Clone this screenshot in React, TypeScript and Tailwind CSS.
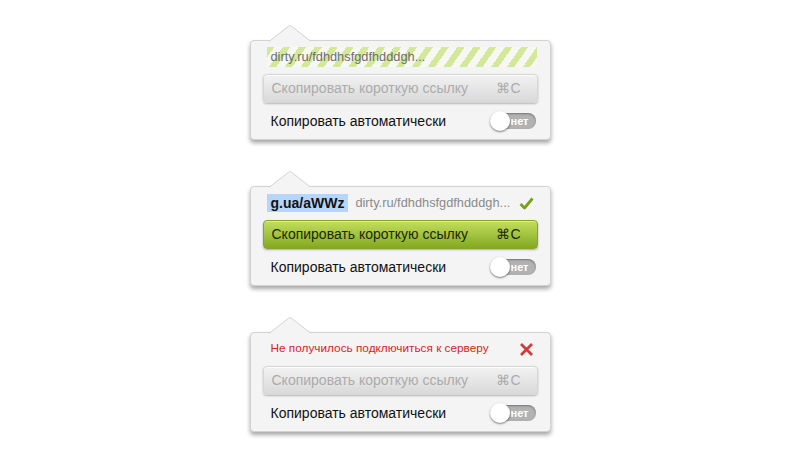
import React from 'react';

const font = { fontFamily: '"Liberation Sans", Arial, sans-serif' };

const Arrow: React.FC = () => (
  <svg
    className="absolute left-[18px] -top-[16px]"
    width="44"
    height="17"
    viewBox="0 0 44 17"
  >
    <path d="M0 16.5 L19.5 1.2 Q21 0 22.5 1.2 L42 16.5" fill="#f4f4f4" stroke="#d2d2d2" strokeWidth="1" />
    <rect x="1" y="16" width="41" height="1" fill="#f4f4f4" />
  </svg>
);

const Toggle: React.FC = () => (
  <div className="relative w-[45px] h-[16px] rounded-full bg-[#b2b2b2] shadow-[inset_0_1px_2px_rgba(0,0,0,0.35)] flex items-center justify-end pr-[7px]">
    <span className="text-[11px] font-bold text-white leading-none">нет</span>
    <div className="absolute -left-[1px] -top-[2px] w-[20px] h-[20px] rounded-full bg-white shadow-[0_1px_2px_rgba(0,0,0,0.5)]" />
  </div>
);

const CopyButton: React.FC<{ active?: boolean }> = ({ active }) =>
  active ? (
    <div className="mt-[7px] h-[29px] rounded-[4px] border border-[#86a526] bg-gradient-to-b from-[#c3df5c] to-[#83a91f] shadow-[0_1px_2px_rgba(0,0,0,0.3),inset_0_1px_0_rgba(255,255,255,0.4)] flex items-center justify-between pl-[8px] pr-[16px] text-[14px] text-[#1c2606]">
      <span>Скопировать короткую ссылку</span>
      <span>⌘C</span>
    </div>
  ) : (
    <div className="mt-[7px] h-[29px] rounded-[4px] border border-[#d6d6d6] bg-gradient-to-b from-[#f2f2f2] to-[#d9d9d9] shadow-[0_1px_2px_rgba(0,0,0,0.25),inset_0_1px_0_rgba(255,255,255,0.8)] flex items-center justify-between pl-[8px] pr-[16px] text-[14px] text-[#ababab]">
      <span>Скопировать короткую ссылку</span>
      <span>⌘C</span>
    </div>
  );

const AutoRow: React.FC = () => (
  <div className="h-[36px] flex items-center justify-between pl-[8px] pr-[2px]">
    <span className="text-[14px] text-[#111]">Копировать автоматически</span>
    <Toggle />
  </div>
);

const Card: React.FC<{ children: React.ReactNode }> = ({ children }) => (
  <div className="relative w-[301px] h-[100px] bg-[#f4f4f4] border border-[#d2d2d2] rounded-[4px] shadow-[0_3px_4px_rgba(0,0,0,0.35)] px-[12px] pt-[6px]">
    <Arrow />
    {children}
  </div>
);

const App: React.FC = () => {
  return (
    <div className="w-[800px] h-[458px] bg-white flex flex-col items-center pt-[40px]" style={font}>
      <div className="flex flex-col gap-[46px]">
        {/* loading */}
        <Card>
          <div className="h-[20px] ml-[4px] mr-[1px] flex items-center pl-[4px] text-[12.8px] text-[#6e6e6e] bg-[repeating-linear-gradient(125deg,#d4e89a_0px,#d4e89a_6px,#f7f7f3_6px,#f7f7f3_13px)]">
            dirty.ru/fdhdhsfgdfhdddgh...
          </div>
          <CopyButton />
          <AutoRow />
        </Card>

        {/* success */}
        <Card>
          <div className="h-[20px] ml-[4px] flex items-center text-[12.8px]">
            <span className="bg-[#b5d5fb] px-[4px] h-[18px] flex items-center text-[14px] font-bold text-[#111]">g.ua/aWWz</span>
            <span className="ml-[7px] text-[#8a8a8a]">dirty.ru/fdhdhsfgdfhdddgh...</span>
            <svg className="ml-auto mr-[4px]" width="15" height="13" viewBox="0 0 15 13">
              <path d="M1.5 7 L5.5 11 L13.5 1.5" fill="none" stroke="#78a216" strokeWidth="2.8" strokeLinejoin="round" />
            </svg>
          </div>
          <CopyButton active />
          <AutoRow />
        </Card>

        {/* error */}
        <Card>
          <div className="h-[20px] ml-[8px] flex items-center text-[11.8px] text-[#d62424]">
            <span>Не получилось подключиться к серверу</span>
            <svg className="ml-auto mr-[5px]" width="13" height="13" viewBox="0 0 13 13">
              <path d="M2 2 L11 11 M11 2 L2 11" fill="none" stroke="#d53a3a" strokeWidth="2.8" strokeLinecap="square" />
            </svg>
          </div>
          <CopyButton />
          <AutoRow />
        </Card>
      </div>
    </div>
  );
};

export default App;
